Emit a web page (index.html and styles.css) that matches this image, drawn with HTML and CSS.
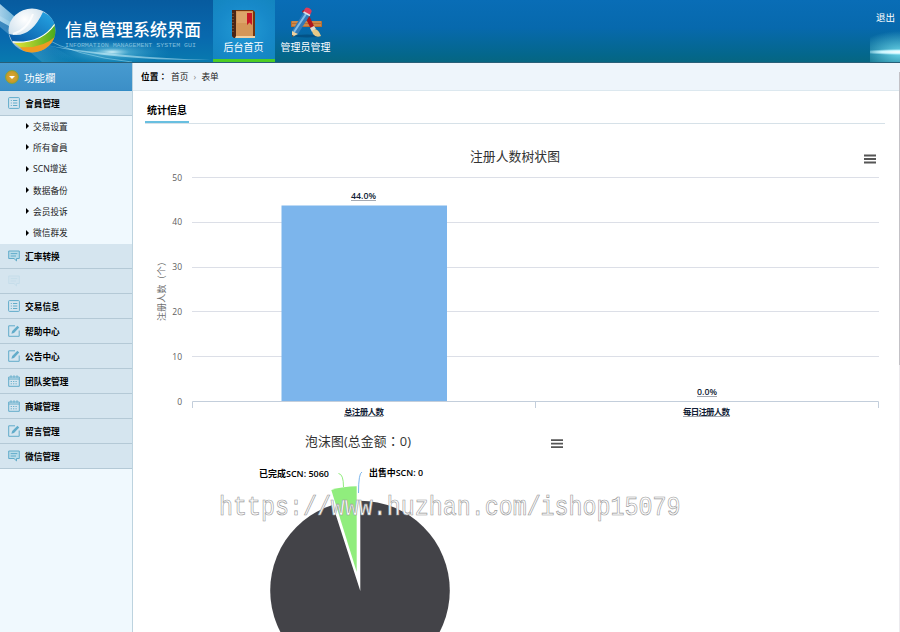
FILE: index.html
```html
<!DOCTYPE html>
<html lang="zh">
<head>
<meta charset="utf-8">
<title>信息管理系统界面</title>
<link rel="stylesheet" href="styles.css">
</head>
<body>
<svg width="0" height="0" class="defs">
  <defs>
    <symbol id="i-list" viewBox="0 0 12 12"><rect x=".6" y=".6" width="10.8" height="10.8" rx=".8"/><path d="M2.8 3.5h1M5 3.5h4.3M2.8 6h1M5 6h4.3M2.8 8.5h1M5 8.5h4.3"/></symbol>
    <symbol id="i-chat" viewBox="0 0 12 12"><path fill="#b9dce9" d="M.7 1h10.6v7.5H8.5v2.4L6 8.5H.7z"/><path d="M2.7 3.6h6.6M2.7 6h5.3"/></symbol>
    <symbol id="i-edit" viewBox="0 0 12 12"><path d="M7 .8H.7v10.5h10.5V5.5"/><path class="solid" d="M3.4 8.8l.8-2.7L9.4.8l1.8 1.8L6 7.9z"/></symbol>
    <symbol id="i-cal" viewBox="0 0 12 12"><path d="M.7 2h10.6v9.3H.7zM.7 4h10.6M3 .3v2.4M6 .3v2.4M9 .3v2.4"/><path stroke-dasharray="1.2 1.2" d="M2.700 6.500h7M2.700 8.800h7"/></symbol>
  </defs>
</svg>
<div class="app">
  <header class="top">
    <div class="brand">
      <svg class="sky" width="213" height="62" viewBox="0 0 213 62">
        <defs>
          <linearGradient id="beam"><stop offset="0" stop-color="#d8f4ff" stop-opacity=".75"/><stop offset=".5" stop-color="#9ee2f5" stop-opacity=".5"/><stop offset="1" stop-color="#46b7df" stop-opacity="0"/></linearGradient>
          <radialGradient id="glow"><stop offset="0" stop-color="#e4fdff" stop-opacity=".9"/><stop offset=".3" stop-color="#7cd5ea" stop-opacity=".45"/><stop offset="1" stop-color="#299dcc" stop-opacity="0"/></radialGradient>
          <radialGradient id="ball" cx=".35" cy=".25" r=".75"><stop offset="0" stop-color="#fff"/><stop offset=".55" stop-color="#d3e3ee"/><stop offset="1" stop-color="#7399b3"/></radialGradient>
          <linearGradient id="blueband" x1="0" y1="1" x2="1" y2="0"><stop offset="0" stop-color="#0756a3"/><stop offset="1" stop-color="#27a8e6"/></linearGradient>
          <linearGradient id="greenband"><stop offset="0" stop-color="#e9e436"/><stop offset="1" stop-color="#43a91e"/></linearGradient>
          <clipPath id="globe"><ellipse cx="32" cy="30.5" rx="23.5" ry="22"/></clipPath>
        </defs>
        <path d="M0 4L28 28L52 50L0 21z" fill="url(#beam)"/>
        <path d="M0 16L80 62H42L0 27z" fill="url(#beam)" opacity=".35"/>
        <ellipse cx="112" cy="52" rx="60" ry="13" fill="url(#glow)"/>
        <path d="M50 46Q120 57 211 60Q118 61 50 46" fill="#d9faff" opacity=".5"/>
        <path d="M42 37Q75 56 132 62" fill="none" stroke="#c6f4ff" opacity=".4"/>
        <g clip-path="url(#globe)">
          <path d="M8 8h48v45H8z" fill="url(#ball)"/>
          <path d="M9 34Q30 40 43 12L52 17Q55 22 54 26Q38 46 12 41z" fill="url(#blueband)"/>
          <path d="M13 42Q40 45 54 24L57 36Q46 50 21 48z" fill="url(#greenband)"/>
          <path d="M20 47Q43 49 57 35L51 51Q40 57 26 54z" fill="#ef9b22"/>
          <path d="M13 34Q27 30 33 14" fill="none" stroke="#fff" stroke-width="2" opacity=".8"/>
          <path d="M13 42Q41 44 55 24" fill="none" stroke="#fff" stroke-width="1.3"/>
        </g>
      </svg>
      <div class="names"><h1>信息管理系统界面</h1><p><svg width="132" height="7"><text x="0" y="6" textLength="131" lengthAdjust="spacingAndGlyphs">INFORMATION MANAGEMENT SYSTEM GUI</text></svg></p></div>
    </div>
    <nav class="modules">
      <a class="module active">
        <svg width="26" height="30" viewBox="0 0 26 30">
          <path d="M2 1h20l2 2v26H3l-2-2z" fill="#75360f"/><path d="M5 2h17v25H5z" fill="#d49658"/><path d="M6 3h15v11H6z" fill="#e1aa70" opacity=".7"/><path d="M1 1h4v28H3l-2-2z" fill="#4b2515"/><path d="M5 27h19v2H4z" fill="#f1d0a2"/><path d="M16 4h5v12l-2.500-2.500L16 16z" fill="#c81525"/><path d="M2 4v21" stroke="#9b7149" stroke-dasharray="1 2"/>
        </svg><span>后台首页</span>
      </a>
      <a class="module">
        <svg width="34" height="32" viewBox="0 0 34 32">
          <ellipse cx="18" cy="29" rx="13" ry="1.500" fill="#003c68" opacity=".5"/>
          <rect x="2" y="14" width="31" height="6" rx=".6" fill="#b86f32"/><path d="M3 15h29M3 18h29" stroke="#e0a362"/>
          <path d="M13 4l4-2 8 17-3 3z" fill="#ad151c"/><path d="M21 21l4-2 2 3-4 3z" fill="#e3dccd"/><path d="M23 24Q28 19 32 29Q27 31 24 27z" fill="#e7c987"/>
          <path d="M15 5l6 3L9 27l-6-3z" fill="#347ab9"/><path d="M17 7L5 25" stroke="#82bee9" stroke-width="2"/><path d="M3 24l6 3-6 3z" fill="#f0d2a0"/><path d="M3 28v2l2-1z" fill="#333"/><path d="M15 4q1-5 5-3t2 5l-1 2-6-3z" fill="#df3b58"/><path d="M14.500 5l6.500 3.500" stroke="#d7e1e7" stroke-width="1.500"/>
        </svg><span>管理员管理</span>
      </a>
    </nav>
    <div class="exit"><span>退出</span></div>
  </header>
  <div class="body">
    <aside class="side">
      <div class="side-head"><i class="drop"></i>功能欄</div>
      <div class="group"><svg><use href="#i-list"/></svg>會員管理</div>
      <ul class="sub"><li>交易设置</li><li>所有會員</li><li>SCN增送</li><li>数据备份</li><li>会员投诉</li><li>微信群发</li></ul>
      <div class="group"><svg><use href="#i-chat"/></svg>汇率转换</div>
      <div class="group faded"><svg><use href="#i-chat"/></svg></div>
      <div class="group"><svg><use href="#i-list"/></svg>交易信息</div>
      <div class="group"><svg><use href="#i-edit"/></svg>帮助中心</div>
      <div class="group"><svg><use href="#i-edit"/></svg>公告中心</div>
      <div class="group"><svg><use href="#i-cal"/></svg>团队奖管理</div>
      <div class="group"><svg><use href="#i-cal"/></svg>商城管理</div>
      <div class="group"><svg><use href="#i-edit"/></svg>留言管理</div>
      <div class="group"><svg><use href="#i-chat"/></svg>微信管理</div>
    </aside>
    <main class="main">
      <div class="crumbs"><b>位置<span lang="zh-TW" class="colon">：</span></b><span>首页</span><i>›</i><span>表单</span></div>
      <div class="tabs"><b>统计信息</b></div>
      <svg class="charts" width="767" height="508" viewBox="133 124 767 508">
        <g class="title"><text x="470" y="161" textLength="90">注册人数树状图</text><text x="305" y="445.500" textLength="106">泡沫图(总金额<tspan class="colon" lang="zh-TW">：</tspan>0)</text></g>
        <path class="burger" d="M864 155.500h12M864 159h12M864 162.500h12M551 440.200h12M551 443.700h12M551 447.200h12"/>
        <path class="grid" d="M192 177.500h687M192 222.500h687M192 267.500h687M192 311.500h687M192 356.500h687"/>
        <rect x="281.500" y="205.500" width="165.500" height="196" fill="#7cb5ec"/>
        <path class="axis" d="M192.500 408v-6.500h686v6.500M535.500 401.500v6.500"/>
        <g class="ticks"><text x="182" y="181">50</text><text x="182" y="225">40</text><text x="182" y="270">30</text><text x="182" y="315">20</text><text x="182" y="360">10</text><text x="182" y="405">0</text></g>
        <text class="ytitle" transform="translate(165 321) rotate(-90)" textLength="64">注册人数（个）</text>
        <g class="label"><text x="351" y="198.500" textLength="25" lengthAdjust="spacingAndGlyphs">44.0%</text><text x="697" y="394.500" textLength="20" lengthAdjust="spacingAndGlyphs">0.0%</text><text x="344" y="415" textLength="40">总注册人数</text><text x="683" y="415" textLength="47">每日注册人数</text></g>
        <path class="under" d="M351 200.500h25M697 396.500h20M344 416.500h39M683 416.500h47"/>
        <circle cx="360" cy="590.500" r="89.800" fill="#434348"/>
        <path d="M360.300 591L360.300 499H330L332 503z" fill="#fff"/>
        <path d="M356.700 572V486.300Q343.500 486.300 331.300 490z" fill="#90ed7d"/>
        <path d="M338.500 473.500Q343.500 474 343.500 487" fill="none" stroke="#90ed7d"/>
        <path d="M362 472Q358.500 473 358.500 493" fill="none" stroke="#7cb5ec"/>
        <g class="pie-label"><text x="259" y="477" textLength="70" lengthAdjust="spacingAndGlyphs">已完成SCN: 5060</text><text x="369" y="476" textLength="54" lengthAdjust="spacingAndGlyphs">出售中SCN: 0</text></g>
        <text class="watermark" transform="translate(219 514.500) scale(.833 1)" textLength="554">https://www.huzhan.com/ishop15079</text>
      </svg>
      <i class="scroll"></i>
    </main>
  </div>
</div>
</body>
</html>
```
FILE: styles.css
```css
* { box-sizing: border-box; }
body { margin: 0; font: 9px "Open Sans", "Noto Sans CJK SC", sans-serif; color: #222; background: #fff; }
h1, p, ul { margin: 0; padding: 0; }
.defs { position: absolute; }
.colon { font-family: "Noto Sans CJK TC", sans-serif; }
.app { width: 900px; height: 632px; overflow: hidden; display: flex; flex-direction: column; }

.top { height: 63px; flex: none; display: flex; background: linear-gradient(#096db6, #0769ad 45%, #04678c 88%, #066681); border-bottom: 1px solid #285f78; }
.brand { width: 213px; height: 62px; position: relative; padding: 18px 0 0 65px; background: linear-gradient(#075b9f, #0869ae 60%, #087aaf); }
.sky { position: absolute; left: 0; top: 0; }
.names { position: relative; }
.names h1 { font-size: 17px; line-height: 23px; font-weight: 500; color: #fff; white-space: nowrap; }
.names p { height: 7px; line-height: 0; }
.names text { font: 6px "Liberation Mono", monospace; fill: #7fbfdd; }
.modules { display: flex; flex: 1; }
.module { width: 62px; height: 62px; display: flex; flex-direction: column; align-items: center; justify-content: flex-end; color: #fff; font-size: 10px; line-height: 14px; padding-bottom: 8px; white-space: nowrap; }
.module span { margin-left: -1px; }
.module svg { margin-bottom: 1px; }
.module.active { background: radial-gradient(ellipse at 50% 50%, #239bd5, #1789c9 60%, #1385bf); border-bottom: 3px solid #4dcd23; padding-bottom: 5px; }
.exit { width: 30px; padding: 11px 0 0 6px; color: #fff; font-size: 9.5px; line-height: 14px; background: radial-gradient(ellipse 38px 3px at 100% 52px, #fff, #c9f6ff 50%, transparent), radial-gradient(ellipse 44px 22px at 100% 53px, #6bd5e9, transparent); white-space: nowrap; }

.body { display: flex; flex: 1; min-height: 0; }
.side { width: 133px; flex: none; background: #f0f9fe; border-right: 1px solid #bdd3df; }
.side-head { height: 28px; display: flex; align-items: center; gap: 5px; padding: 1px 0 0 5px; color: #fff; font-size: 10.5px; background: linear-gradient(#479bd0, #3c8fc7); border-bottom: 1px solid #328bc5; }
.drop { width: 14px; height: 14px; border-radius: 50%; background: radial-gradient(#dfab32, #b88f24); display: flex; align-items: center; justify-content: center; border: 1px solid #7da344; }
.drop::after { content: ""; border: 3px solid transparent; border-top-color: #fff; border-bottom: 0; }
.group { height: 25px; display: flex; align-items: center; gap: 5px; padding-left: 8px; font-weight: 700; font-size: 8.7px; color: #000; background: #d5e5ef; border-bottom: 1px solid #b4c9d6; }
.group svg { width: 12px; height: 12px; fill: none; stroke: #62acca; stroke-width: 1; }
.solid { fill: #62acca; stroke: none; }
.faded svg { opacity: .12; }
.sub { list-style: none; height: 128px; display: grid; grid-template-rows: repeat(6, 1fr); }
.sub li { display: flex; align-items: center; gap: 4px; padding: 0 0 1px 26px; font-size: 8.7px; color: #222; }
.sub li::before { content: ""; border: 3px solid transparent; border-left-color: #000; border-right: 0; }

.main { flex: 1; min-width: 0; position: relative; }
.crumbs { height: 28px; display: flex; align-items: center; padding-left: 8px; background: #eef5fb; border-bottom: 1px solid #dce8ef; font-size: 8.7px; color: #222; }
.crumbs b { width: 30px; white-space: nowrap; color: #000; }
.crumbs i { width: 13px; text-align: center; font-style: normal; color: #888; }
.tabs { height: 33px; margin: 0 15px 0 12px; border-bottom: 1px solid #d6e1e8; display: flex; align-items: flex-end; }
.tabs b { height: 23px; width: 44px; padding-left: 2px; line-height: 21px; font-size: 10px; color: #000; border-bottom: 2px solid #68bfe0; white-space: nowrap; }
.charts { display: block; }
.title { font-size: 12.8px; fill: #333; }
.burger { stroke: #555; stroke-width: 1.8; fill: none; }
.grid { stroke: #dcdfe7; fill: none; }
.axis { stroke: #c3cedb; fill: none; }
.ticks { font: 8.5px "Open Sans", sans-serif; fill: #606060; text-anchor: end; }
.ytitle { font-size: 9px; fill: #707070; }
.label { font-size: 8.5px; font-weight: 600; fill: #111d35; }
.under { stroke: #7c8490; stroke-width: .7; }
.pie-label { font-size: 8.8px; font-weight: 600; fill: #000; }
.watermark { font: 28px "Liberation Mono", monospace; fill: #fff; stroke: #999; stroke-width: .7; }
.scroll { position: absolute; right: 0; top: 9px; width: 1px; height: 293px; background: #c3c1c6; box-shadow: 0 293px #eceaee; }
```
